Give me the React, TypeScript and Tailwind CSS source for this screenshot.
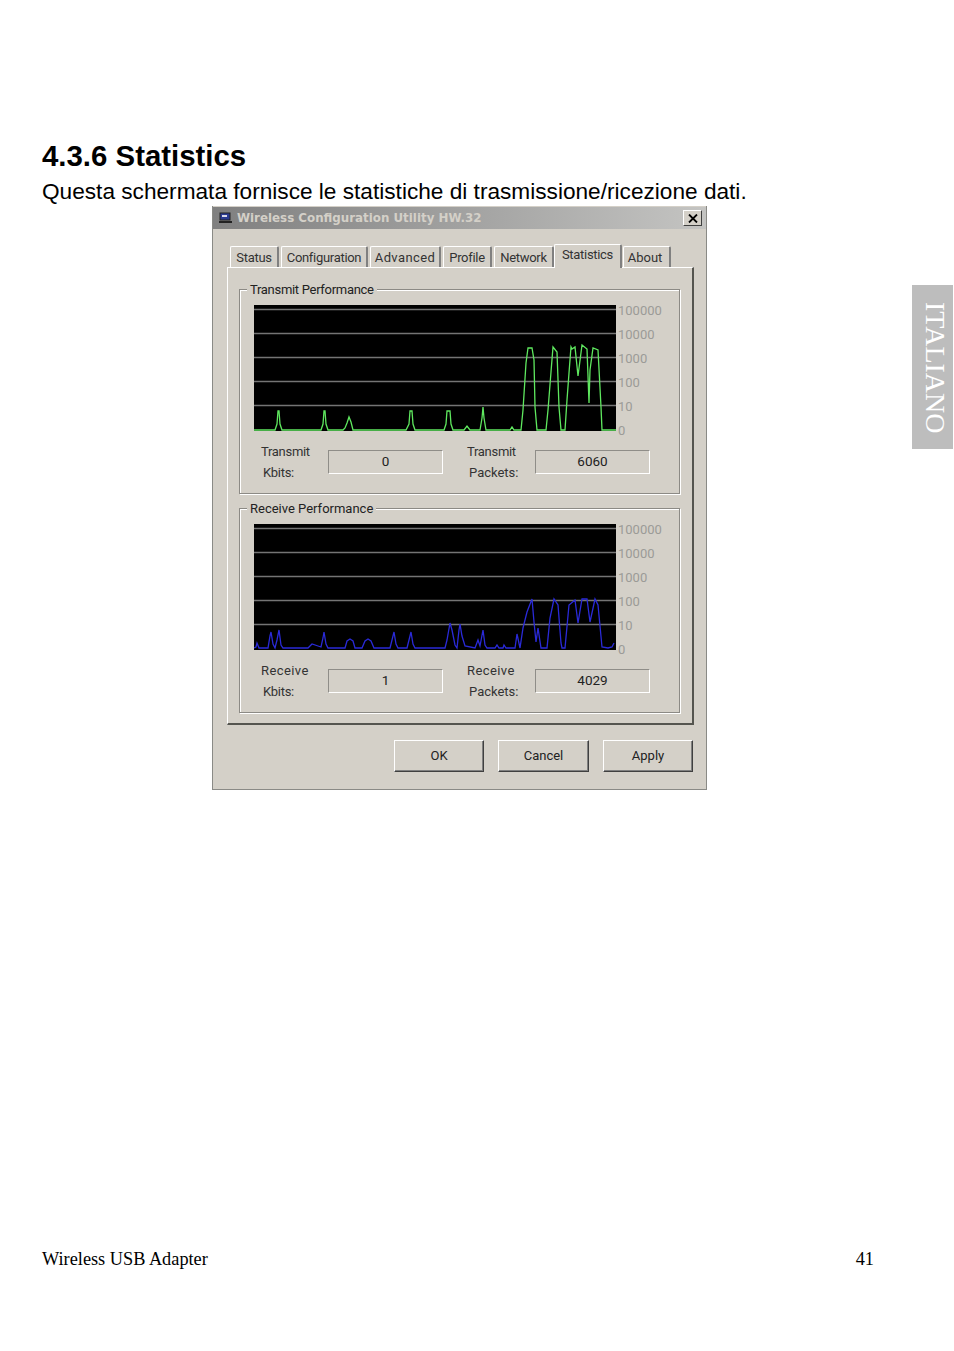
import React from "react";

const TX_POINTS =
  "254,430 275,430 277,424 278,411 279,411 280,424 282,430 321,430 323,424 324,411 325,411 326,424 328,430 343,430 345,428 347,423 349,417 351,422 353,430 406,430 409,424 410,411 412,411 413,424 415,430 444,430 446,424 447,411 450,411 451,424 453,430 464,430 467,426 470,430 480,430 482,418 483,407 484,418 486,430 510,430 512,427 514,430 521,430 523,410 526,363 528,348 532,348 534,360 535,407 537,430 546,430 548,410 551,372 553,347 557,352 559,407 561,430 565,430 567,400 569,373 571,347 572,349 575,347 578,376 582,345 587,349 589,403 590,370 593,348 598,350 601,407 602,430 616,430";

const RX_POINTS =
  "254,648 256,647 257,643 259,648 268,648 270,636 271,632 273,644 275,648 277,640 279,630 281,645 283,648 308,648 310,646 312,644 318,646 321,647 323,638 324,632 326,644 328,648 345,648 347,641 350,639 353,641 355,648 362,648 365,641 368,639 371,641 374,648 390,648 392,640 394,632 396,644 398,648 407,648 409,640 411,632 413,644 415,648 445,648 447,640 450,623 452,630 455,645 457,648 459,630 460,624 462,636 465,646 475,648 478,640 480,646 483,630 485,645 487,648 495,648 497,645 499,648 503,648 504,645 506,648 515,648 517,634 520,648 523,628 527,612 532,599 534,622 536,642 538,628 541,648 547,648 550,618 554,599 558,605 561,643 562,648 565,648 569,605 575,600 578,623 582,599 587,599 590,622 595,599 598,605 602,647 608,648 612,647 614,643";

const TABS = [
  { label: "Status", cls: "w-[49px] tracking-[-0.3px]" },
  { label: "Configuration", cls: "w-[87px] tracking-[-0.3px]" },
  { label: "Advanced", cls: "w-[71px] tracking-[0.4px]" },
  { label: "Profile", cls: "w-[49px] tracking-[-0.3px]" },
  { label: "Network", cls: "w-[60px] tracking-[-0.3px]" },
];

const SCALE = ["100000", "10000", "1000", "100", "10", "0"];

function Chart({ top, points, color }: { top: number; points: string; color: string }) {
  const lines = [4, 28, 52, 76, 100];
  return (
    <div className="flex h-[127px]">
      <svg
        className="block w-[362px] h-[126px] bg-black"
        viewBox={`254 ${top} 362 126`}
      >
        {lines.map((y) => (
          <line
            key={y}
            x1="254"
            x2="616"
            y1={top + y + 0.5}
            y2={top + y + 0.5}
            stroke="#747474"
            strokeWidth="1.3"
          />
        ))}
        <polyline points={points} fill="none" stroke={color} strokeWidth="1.3" />
      </svg>
      <div className="ml-[2px] -mt-[6px] flex flex-col text-[#9b9b97] text-[13px] leading-[24px]">
        {SCALE.map((s) => (
          <span key={s}>{s}</span>
        ))}
      </div>
    </div>
  );
}

function ReadOnly({ value }: { value: string }) {
  return (
    <div className="w-[115px] h-[24px] pb-[2px] flex items-center justify-center border border-[#8f8d88] border-b-white border-r-white text-[#222] text-[13.5px]">
      {value}
    </div>
  );
}

function Group({
  title,
  titleCls,
  top,
  points,
  color,
  label,
  labelCls,
  kbits,
  packets,
}: {
  title: string;
  titleCls: string;
  top: number;
  points: string;
  color: string;
  label: string;
  labelCls: string;
  kbits: string;
  packets: string;
}) {
  return (
    <div className="relative h-[205px] border border-[#8c8a85] shadow-[inset_1px_1px_0_#fff,1px_1px_0_#fff] pt-[15px] pl-[14px]">
      <span className={`absolute left-[7px] -top-[8px] bg-[#d4d0c8] px-[3px] text-[13px] leading-[16px] text-[#222] ${titleCls}`}>
        {title}
      </span>
      <Chart top={top} points={points} color={color} />
      <div className="flex mt-[18px] text-[13px] leading-[21px] text-[#333]">
        <div className="w-[74px] pl-[7px] -mt-[9px] tracking-[-0.3px]">
          <div className={labelCls}>{label}</div>
          <div className="pl-[2px]">Kbits:</div>
        </div>
        <ReadOnly value={kbits} />
        <div className="w-[92px] pl-[24px] -mt-[9px]">
          <div className={labelCls}>{label}</div>
          <div className="pl-[2px]">Packets:</div>
        </div>
        <ReadOnly value={packets} />
      </div>
    </div>
  );
}

function DialogButton({ label, width }: { label: string; width: string }) {
  return (
    <button className={`${width} h-[32px] bg-[#d4d0c8] border border-white border-r-[#404040] border-b-[#404040] shadow-[inset_-1px_-1px_0_#808080] text-[13px] text-[#222]`}>
      {label}
    </button>
  );
}

export default function App() {
  return (
    <div className="flex w-[954px] h-[1351px] bg-white font-['Liberation_Sans',Arial,sans-serif] text-black">
      <div className="w-[912px] pl-[42px] pt-[138px] flex flex-col">
        <h1 className="text-[29.4px] leading-[36px] font-bold">4.3.6 Statistics</h1>
        <p className="text-[22.65px] leading-[26px] mt-[4px] whitespace-nowrap">
          Questa schermata fornisce le statistiche di trasmissione/ricezione dati.
        </p>

        {/* dialog */}
        <div className="ml-[170px] mt-[2px] w-[495px] h-[584px] bg-[#d4d0c8] border border-[#8a8a86] border-t-0 font-['Roboto','Liberation_Sans',sans-serif]">
          <div className="h-[22px] mt-px flex items-center bg-gradient-to-r from-[#808080] to-[#c4c4c2] pl-[6px] pr-[4px]">
            <svg className="w-[14px] h-[12px]" viewBox="0 0 14 12">
              <rect x="1" y="1" width="10" height="7" fill="#2a3a90" stroke="#222" />
              <rect x="0" y="9" width="13" height="2" fill="#222" />
              <rect x="3" y="3" width="5" height="2" fill="#d8d8e8" />
            </svg>
            <span className="ml-[4px] pt-[2px] text-[11.85px] font-bold text-[#d4d0c8] font-['DejaVu_Sans',sans-serif] whitespace-nowrap">
              Wireless Configuration Utility HW.32
            </span>
            <button className="ml-auto w-[19px] h-[16px] flex items-center justify-center bg-[#d4d0c8] border border-white border-r-[#404040] border-b-[#404040]">
              <svg className="w-[10px] h-[9px]" viewBox="0 0 10 9">
                <path d="M1 0.5 L9 8.5 M9 0.5 L1 8.5" stroke="#000" strokeWidth="1.8" />
              </svg>
            </button>
          </div>

          <div className="pl-[14px] pr-[12px] pt-[14px]">
            <div className="flex items-end h-[24px] pl-[3px] gap-[2px] text-[13px] text-[#333]">
              {TABS.map((t) => (
                <div
                  key={t.label}
                  className={`${t.cls} h-[21px] pt-[2px] flex items-center justify-center border-l border-t border-white border-r-2 border-r-[#808080] rounded-t-[2px] whitespace-nowrap`}
                >
                  {t.label}
                </div>
              ))}
              <div className="-ml-[2px] relative z-10 -mb-px w-[68px] h-[24px] pb-[3px] tracking-[-0.3px] flex items-center justify-center bg-[#d4d0c8] border-l border-t border-white border-r-2 border-r-[#808080] rounded-t-[2px]">
                Statistics
              </div>
              <div className="-ml-[1px] w-[48px] h-[21px] pt-[2px] pr-[3px] flex items-center justify-center border-l border-t border-white border-r-2 border-r-[#808080] rounded-t-[2px]">
                About
              </div>
            </div>

            <div className="h-[458px] border border-white border-r-2 border-r-[#55554f] border-b-2 border-b-[#55554f] pt-[21px] pl-[11px] pr-[12px] flex flex-col gap-[14px]">
              <Group
                title="Transmit Performance"
                titleCls="tracking-[-0.3px]"
                top={305}
                points={TX_POINTS}
                color="#5fe85f"
                label="Transmit"
                labelCls="tracking-[-0.3px]"
                kbits="0"
                packets="6060"
              />
              <Group
                title="Receive Performance"
                titleCls="tracking-[0px]"
                top={524}
                points={RX_POINTS}
                color="#2a2ad8"
                label="Receive"
                labelCls="tracking-[0.4px]"
                kbits="1"
                packets="4029"
              />
            </div>

            <div className="flex justify-end gap-[14px] mt-[15px] pr-[1px]">
              <DialogButton label="OK" width="w-[90px]" />
              <DialogButton label="Cancel" width="w-[91px]" />
              <DialogButton label="Apply" width="w-[90px]" />
            </div>
          </div>
        </div>

        {/* footer */}
        <div className="mt-[458px] w-[832px] flex justify-between font-['Liberation_Serif',serif] text-[18.3px] leading-[22px]">
          <span>Wireless USB Adapter</span>
          <span>41</span>
        </div>
      </div>

      <div className="pt-[285px]">
        <div className="w-[41px] h-[164px] bg-[#bdbdbd] pt-[17px] pl-[6px] text-white font-['Liberation_Serif',serif] text-[28px] leading-[35px] [writing-mode:vertical-rl]">
          ITALIANO
        </div>
      </div>
    </div>
  );
}
